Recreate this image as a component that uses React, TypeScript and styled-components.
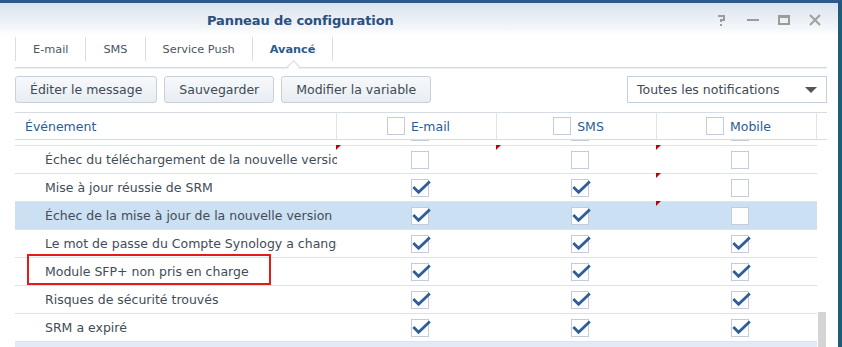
import React from "react";
import styled, { createGlobalStyle } from "styled-components";

const GlobalStyle = createGlobalStyle`
  body {
    margin: 0;
    background: #fff;
    font-family: "DejaVu Sans", Verdana, sans-serif;
  }
`;

type Channel = "email" | "sms" | "mobile";

interface EventRow {
  label: string;
  email: boolean;
  sms: boolean;
  mobile: boolean;
  dirty?: Channel[];
  selected?: boolean;
  hovered?: boolean;
  flagged?: boolean;
}

const rows: EventRow[] = [
  { label: "Mise à jour de SRM disponible", email: false, sms: false, mobile: false },
  {
    label: "Échec du téléchargement de la nouvelle version de SRM",
    email: false,
    sms: false,
    mobile: false,
    dirty: ["email", "sms", "mobile"],
  },
  { label: "Mise à jour réussie de SRM", email: true, sms: true, mobile: false, dirty: ["mobile"] },
  {
    label: "Échec de la mise à jour de la nouvelle version",
    email: true,
    sms: true,
    mobile: false,
    dirty: ["mobile"],
    selected: true,
  },
  { label: "Le mot de passe du Compte Synology a changé", email: true, sms: true, mobile: true },
  { label: "Module SFP+ non pris en charge", email: true, sms: true, mobile: true, flagged: true },
  { label: "Risques de sécurité trouvés", email: true, sms: true, mobile: true },
  { label: "SRM a expiré", email: true, sms: true, mobile: true },
  { label: "SRM expire bientôt", email: true, sms: true, mobile: true, hovered: true },
];

const Frame = styled.div`
  width: 842px;
  height: 347px;
  box-sizing: border-box;
  border-top: 3px solid #2c5a8c;
  border-right: 4px solid #1f5b7c;
  background: #fff;
  overflow: hidden;
  display: flex;
  flex-direction: column;
`;

const TitleBar = styled.div`
  height: 32px;
  box-sizing: border-box;
  padding: 2px 8px 0 207px;
  flex: none;
  display: flex;
  align-items: center;
  background: linear-gradient(#dae3ed, #f4f7fa 80%, #fff);
`;

const Title = styled.div`
  font-size: 13px;
  font-weight: bold;
  color: #2a4f80;
  letter-spacing: -0.1px;
`;

const Controls = styled.div`
  margin-left: auto;
  display: flex;
`;

const ControlButton = styled.div`
  width: 31px;
  height: 20px;
  display: flex;
  align-items: center;
  justify-content: center;
`;

const TabBar = styled.div`
  flex: none;
  height: 33px;
  box-sizing: border-box;
  margin: 0 11px 0 15px;
  padding-top: 2px;
  border-bottom: 1px solid #d3d9df;
  box-shadow: 0 1px 0 #eef1f4;
  display: flex;
  align-items: flex-start;
`;

const Tab = styled.div<{ $active?: boolean; $first?: boolean }>`
  position: relative;
  height: 24px;
  padding: 0 17px;
  display: flex;
  align-items: center;
  font-size: 11.3px;
  color: ${(p) => (p.$active ? "#2b5a8c" : "#4b5661")};
  font-weight: ${(p) => (p.$active ? "bold" : "normal")};
  border-right: 1px solid #d6dee7;
  border-left: ${(p) => (p.$first ? "1px solid #d6dee7" : "none")};

  ${(p) =>
    p.$active &&
    `
    &::after {
      content: "";
      position: absolute;
      left: 50%;
      bottom: -10px;
      width: 8px;
      height: 8px;
      margin-left: -4px;
      background: #fff;
      border-left: 1px solid #d3d9df;
      border-top: 1px solid #d3d9df;
      transform: rotate(45deg);
    }
  `}
`;

const Toolbar = styled.div`
  flex: none;
  margin: 8px 11px 0 15px;
  height: 27px;
  display: flex;
  gap: 7px;
`;

const Button = styled.div`
  height: 27px;
  box-sizing: border-box;
  padding: 0 14px;
  display: flex;
  align-items: center;
  border: 1px solid #c7d1dc;
  border-radius: 3px;
  background: linear-gradient(#f7f9fb, #e8edf3);
  font-size: 12.5px;
  color: #404a55;
  white-space: nowrap;
`;

const Select = styled.div`
  margin-left: auto;
  width: 200px;
  height: 27px;
  box-sizing: border-box;
  border: 1px solid #c6d0dc;
  background: #fff;
  display: flex;
  align-items: center;
  padding: 0 9px;
  font-size: 12.5px;
  color: #404a55;
`;

const Caret = styled.div`
  margin-left: auto;
  width: 0;
  height: 0;
  border-left: 6px solid transparent;
  border-right: 6px solid transparent;
  border-top: 6px solid #555;
`;

const Grid = styled.div`
  flex: 1;
  min-height: 0;
  margin: 9px 11px 0 15px;
  border-top: 1px solid #d5dce4;
  display: flex;
  flex-direction: column;
`;

const HeaderRow = styled.div`
  flex: none;
  height: 26px;
  border-bottom: 1px solid #d5dce4;
  display: grid;
  grid-template-columns: 322px 160px 160px 160px 10px;
`;

const HeaderCell = styled.div<{ $center?: boolean }>`
  display: flex;
  align-items: center;
  justify-content: ${(p) => (p.$center ? "center" : "flex-start")};
  padding-left: ${(p) => (p.$center ? "4px" : "10px")};
  gap: 6px;
  font-size: 12.5px;
  color: #2c5b8f;
  border-right: 1px solid #dfe4ea;

  &:last-child {
    border-right: none;
  }
`;

const Body = styled.div`
  flex: 1;
  min-height: 0;
  display: flex;
`;

const RowsArea = styled.div`
  width: 802px;
  overflow: hidden;
`;

const RowList = styled.div`
  margin-top: -22px;
`;

const Row = styled.div<{ $selected?: boolean; $hovered?: boolean }>`
  height: 28px;
  box-sizing: border-box;
  border-bottom: 1px solid #dde3ea;
  display: grid;
  grid-template-columns: 322px 160px 160px 160px;
  background: ${(p) => (p.$selected ? "#cce0f4" : p.$hovered ? "#e3ecf6" : "#fff")};
`;

const TextCell = styled.div`
  position: relative;
  padding-left: 30px;
  line-height: 27px;
  font-size: 12.5px;
  color: #424c57;
  white-space: nowrap;
  min-width: 0;
`;

const Clip = styled.div`
  overflow: hidden;
  width: 292px;
`;

const Flag = styled.div`
  position: absolute;
  left: 12px;
  top: -4px;
  width: 244px;
  height: 31px;
  box-sizing: border-box;
  border: 2px solid #e41b1b;
`;

const CheckCell = styled.div<{ $dirty?: boolean }>`
  position: relative;
  display: flex;
  align-items: center;
  justify-content: center;
  padding-left: 6px;

  ${(p) =>
    p.$dirty &&
    `
    &::before {
      content: "";
      position: absolute;
      left: -1px;
      top: -1px;
      border-top: 5px solid #c20000;
      border-right: 5px solid transparent;
    }
  `}
`;

const Box = styled.div`
  position: relative;
  width: 18px;
  height: 18px;
  box-sizing: border-box;
  border: 1px solid #c3ccd8;
  background: #fff;
  flex: none;
`;

const Tick = styled.svg`
  position: absolute;
  left: -1px;
  top: -1px;
  overflow: visible;
`;

const ScrollTrack = styled.div`
  width: 10px;
  flex: none;
`;

const Thumb = styled.div`
  margin: 172px 0 0 1px;
  width: 8px;
  height: 60px;
  background: #d4d4d4;
`;

function CheckBox({ checked }: { checked?: boolean }) {
  return (
    <Box>
      {checked && (
        <Tick width="18" height="18" viewBox="0 0 18 18">
          <polyline points="2.3,8 7.6,13.2 18.8,2.6" fill="none" stroke="#2f5f97" strokeWidth="2.8" />
        </Tick>
      )}
    </Box>
  );
}

function WindowControls() {
  return (
    <Controls>
      <ControlButton>
        <svg width="9" height="12" viewBox="0 0 9 12">
          <path d="M1 2h6v4H4v2" fill="none" stroke="#9b9b9b" strokeWidth="2" />
          <rect x="3" y="10" width="2" height="2" fill="#9b9b9b" />
        </svg>
      </ControlButton>
      <ControlButton>
        <svg width="12" height="2" viewBox="0 0 12 2">
          <rect width="12" height="2" fill="#9b9b9b" />
        </svg>
      </ControlButton>
      <ControlButton>
        <svg width="12" height="10" viewBox="0 0 12 10">
          <rect x="1" y="1.5" width="10" height="7.5" fill="none" stroke="#9b9b9b" strokeWidth="2" />
          <rect x="0" y="0" width="12" height="3" fill="#9b9b9b" />
        </svg>
      </ControlButton>
      <ControlButton>
        <svg width="12" height="12" viewBox="0 0 12 12">
          <path d="M1 1l10 10M11 1L1 11" stroke="#a0a0a0" strokeWidth="2" />
        </svg>
      </ControlButton>
    </Controls>
  );
}

export default function App() {
  const channels: Channel[] = ["email", "sms", "mobile"];
  return (
    <>
      <GlobalStyle />
      <Frame>
        <TitleBar>
          <Title>Panneau de configuration</Title>
          <WindowControls />
        </TitleBar>

        <TabBar>
          <Tab $first>E-mail</Tab>
          <Tab>SMS</Tab>
          <Tab>Service Push</Tab>
          <Tab $active>Avancé</Tab>
        </TabBar>

        <Toolbar>
          <Button>Éditer le message</Button>
          <Button>Sauvegarder</Button>
          <Button>Modifier la variable</Button>
          <Select>
            Toutes les notifications
            <Caret />
          </Select>
        </Toolbar>

        <Grid>
          <HeaderRow>
            <HeaderCell>Événement</HeaderCell>
            <HeaderCell $center>
              <CheckBox />
              E-mail
            </HeaderCell>
            <HeaderCell $center>
              <CheckBox />
              SMS
            </HeaderCell>
            <HeaderCell $center>
              <CheckBox />
              Mobile
            </HeaderCell>
            <HeaderCell />
          </HeaderRow>

          <Body>
            <RowsArea>
              <RowList>
                {rows.map((r) => (
                  <Row key={r.label} $selected={r.selected} $hovered={r.hovered}>
                    <TextCell>
                      <Clip>{r.label}</Clip>
                      {r.flagged && <Flag />}
                    </TextCell>
                    {channels.map((c) => (
                      <CheckCell key={c} $dirty={r.dirty?.includes(c)}>
                        <CheckBox checked={r[c]} />
                      </CheckCell>
                    ))}
                  </Row>
                ))}
              </RowList>
            </RowsArea>
            <ScrollTrack>
              <Thumb />
            </ScrollTrack>
          </Body>
        </Grid>
      </Frame>
    </>
  );
}
